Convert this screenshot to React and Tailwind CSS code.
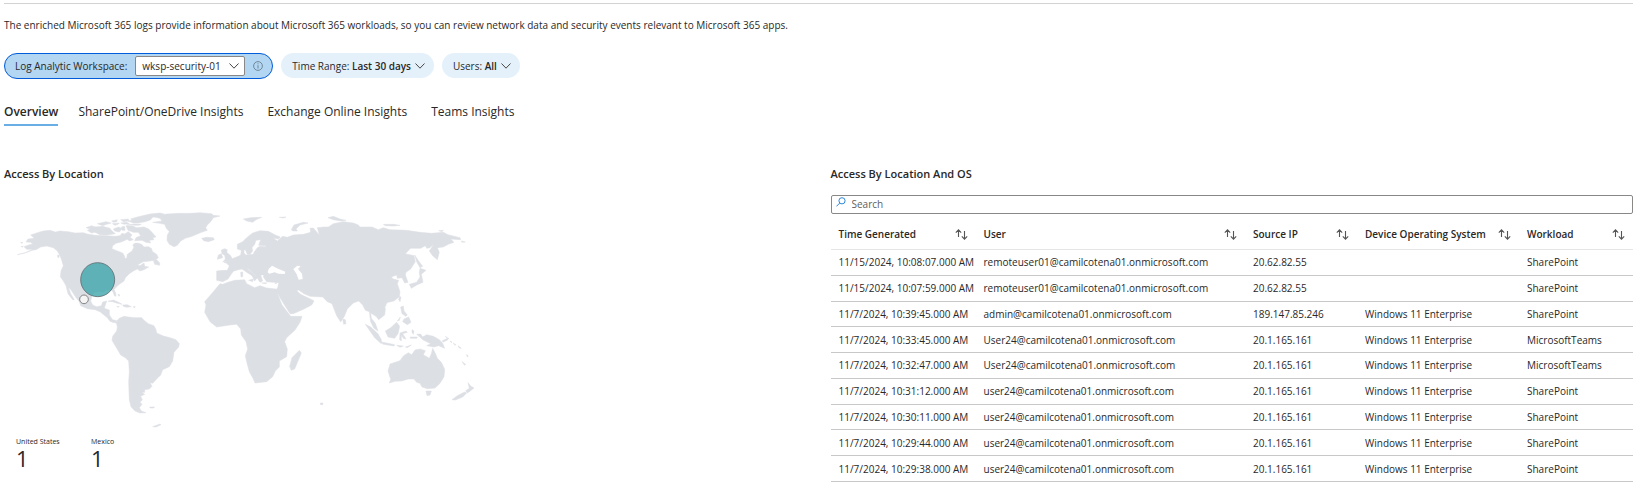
const LAND = [
  // North and Central America
  '52,179 76,173 98,163 80,163 72,155 86,150 98,147 92,142 78,141 84,132 103,130 92,120 112,113 130,108 150,106 166,111 180,108 205,110 225,114 250,113 262,117 285,121 320,122 345,124 360,122 366,115 374,117 385,110 396,120 388,130 366,140 348,145 338,152 336,161 352,168 368,174 374,184 374,190 380,190 382,178 396,168 402,156 398,150 404,145 412,144 425,148 432,156 445,155 454,160 458,170 470,178 475,188 466,195 450,198 430,200 412,210 420,212 432,204 434,214 446,216 432,224 420,228 412,222 400,228 388,236 376,248 372,258 358,268 348,277 342,284 347,294 348,304 343,302 339,290 333,285 318,286 310,291 295,290 283,292 276,302 272,318 278,330 290,335 304,332 308,321 320,318 316,330 313,340 328,345 328,360 338,374 350,377 342,383 330,379 322,368 312,360 300,350 285,344 262,341 242,332 238,320 226,305 214,286 205,276 212,296 223,314 218,314 204,296 198,272 190,258 181,245 183,228 190,212 186,198 180,182 172,168 160,158 140,153 122,156 108,164 96,166 76,174',
  '460,196 470,194 479,204 479,211 464,208', '173,180 178,181 176,189 173,186', '186,200 198,206 196,209', '62,142 69,143 64,145', '63,154 70,154 66,157',
  // Arctic islands
  '262,106 285,96 308,94 330,100 334,106 346,116 320,120 300,119 285,112 274,114', '258,98 275,92 286,96 274,103', '292,86 318,80 334,84 320,88 308,92', '335,78 352,74 350,80 340,82', '337,86 358,84 354,88 345,91', '362,74 385,72 386,78 370,80', '362,84 380,82 388,86 372,88', '378,92 398,93 410,98 432,96 446,102 456,112 468,126 458,128 462,134 448,136 452,144 438,142 426,136 404,137 408,128 422,122 415,112 400,112 384,106', '340,102 356,96 366,101 358,111 344,108', '364,96 374,94 375,106 366,106', '384,78 396,76 392,72 412,66 450,57 480,54 492,57 476,64 458,67 452,74 436,80 414,84 400,84', '380,90 404,87 424,88 416,91', '380,130 392,128 400,134 388,138',
  // Greenland and Iceland
  '458,82 472,80 486,78 480,70 464,66 478,60 500,57 540,55 572,55 600,53 635,56 640,61 660,63 640,68 632,80 622,90 617,98 622,106 605,112 592,117 576,124 556,130 542,138 532,151 522,155 508,148 501,136 502,120 508,110 499,100 494,88 478,85',
  '605,130 620,127 640,128 643,134 625,140 611,137',
  // Caribbean
  '324,319 340,315 356,322 366,328 352,325 338,320', '368,330 382,329 394,335 380,337 370,334', '354,298 360,300 357,304', '399,335 406,335 404,338', '350,334 358,335 354,337',
  // South America
  '340,379 348,380 358,370 372,364 385,366 405,368 425,368 432,376 445,386 462,392 468,404 470,414 490,423 510,428 528,434 538,446 536,456 522,472 518,498 508,515 488,524 482,540 472,550 458,565 450,563 456,574 448,582 434,584 434,592 425,592 434,598 422,604 427,614 420,622 426,628 418,638 424,648 438,653 420,654 405,648 393,635 388,615 387,590 386,560 388,530 386,498 376,488 362,480 348,456 336,436 338,424 350,408 352,396 350,386',
  '449,636 464,636 460,639 451,639', '458,695 480,687 483,689 468,696',
  // Europe and Asia
  '650,228 668,226 682,226 688,213 680,205 672,202 690,196 700,190 715,184 722,180 724,166 732,162 732,174 738,180 760,178 762,172 772,158 780,154 796,155 798,152 776,151 782,134 768,136 764,148 756,158 758,168 750,178 742,178 736,164 724,166 712,162 712,148 728,140 740,128 758,114 780,107 805,109 826,120 841,126 836,132 820,130 832,138 848,124 862,127 880,120 910,118 932,112 930,100 940,99 958,120 952,98 970,96 985,96 1000,86 1030,80 1060,84 1075,90 1080,96 1116,96 1135,104 1150,98 1170,104 1220,106 1260,112 1295,115 1330,112 1344,119 1380,128 1382,134 1352,132 1362,142 1345,148 1330,156 1312,158 1318,172 1312,194 1298,182 1288,168 1296,156 1300,148 1290,158 1280,160 1276,152 1262,160 1232,160 1216,176 1242,182 1246,200 1232,222 1218,232 1216,240 1224,262 1214,264 1206,248 1192,250 1190,240 1174,246 1180,252 1196,256 1192,266 1200,290 1198,305 1182,318 1165,322 1152,328 1156,342 1154,360 1136,374 1128,364 1112,354 1114,370 1126,385 1134,408 1122,400 1112,380 1108,350 1096,346 1088,330 1076,318 1060,324 1042,342 1034,362 1022,381 1010,362 996,326 982,320 968,306 930,304 912,296 896,285 890,287 902,298 914,304 936,314 942,318 935,330 912,342 880,356 870,356 852,328 834,298 826,288 834,276 836,262 818,262 800,260 790,246 792,240 782,240 788,258 780,262 766,240 746,222 738,218 758,234 772,248 764,258 756,242 740,232 726,222 712,225 700,229 692,240 684,252 668,260 650,256',
  '664,165 674,161 682,164 680,172 692,182 697,192 688,197 668,201 676,192 674,181 666,176', '655,180 664,176 668,188 652,193', '722,232 728,231 728,245 723,246', '746,256 760,252 758,260', '785,264 800,263 798,266', '824,264 834,261 828,266',
  '730,72 752,68 785,67 768,74 758,82 740,78', '838,67 858,66 850,69', '874,104 882,90 910,82 924,84 900,90 888,102 892,108 878,108', '984,68 1000,64 1020,72 1038,76 1024,78 1000,74', '1150,88 1180,88 1200,91 1182,93 1156,92', '1316,107 1330,106 1326,110', '1384,138 1396,141 1386,142',
  '1244,180 1256,198 1268,214 1260,218 1250,200', '1260,220 1278,226 1264,238 1269,262 1252,269 1234,280 1228,268 1250,262 1260,246 1258,232', '1199,304 1203,307 1200,320 1196,313', '1152,324 1160,323 1156,335 1150,332',
  '1202,336 1210,333 1212,348 1222,360 1218,364 1206,356', '1212,372 1226,366 1233,382 1222,389 1208,380', '1192,378 1201,366 1198,376', '1028,372 1036,374 1038,386 1031,388',
  // Africa
  '660,266 668,268 684,262 704,256 734,254 740,266 764,278 780,272 800,279 828,282 834,300 846,330 860,348 872,364 906,364 900,382 885,405 860,428 854,440 862,462 860,485 838,498 838,516 826,528 818,545 800,560 765,564 760,552 748,530 740,500 736,482 743,462 738,440 724,420 722,402 710,388 690,390 650,396 630,380 614,352 618,330 614,320 640,290',
  '898,466 904,474 884,522 874,526 869,514 876,488',
  // South East Asia and Oceania
  '1096,388 1112,396 1134,416 1144,434 1144,446 1124,428', '1140,440 1160,444 1184,449 1182,453 1150,448', '1156,408 1172,398 1190,382 1199,394 1194,416 1184,430 1164,426', '1200,414 1218,408 1222,412 1208,416 1218,432 1210,430 1204,420 1204,438 1199,434', '1236,404 1242,408 1240,418 1236,412', '1230,426 1252,426 1250,430 1232,430', '1190,451 1210,453 1200,457', '1216,456 1234,450 1222,458',
  '1250,418 1262,417 1268,426 1280,419 1300,424 1318,434 1328,445 1334,460 1316,452 1302,456 1280,452 1292,446 1268,434 1262,428', '1326,438 1342,430 1344,434 1330,441', '1336,424 1347,431 1342,430', '1350,438 1356,441 1354,443', '1360,444 1368,450 1364,450', '1374,452 1384,460 1378,459', '1386,500 1397,508 1394,511', '1400,478 1405,484 1402,486',
  '1168,515 1170,507 1200,497 1210,483 1225,473 1235,479 1245,465 1260,462 1276,467 1270,479 1288,490 1294,476 1298,460 1306,475 1312,490 1324,502 1334,523 1332,545 1320,565 1305,579 1282,581 1266,576 1260,565 1250,562 1242,552 1225,552 1205,558 1185,559 1168,564 1172,553 1164,528',
  '1278,588 1294,588 1290,600 1281,602', '1404,563 1412,573 1422,579 1412,587 1402,594 1397,587 1408,580', '1394,591 1400,594 1388,606 1366,615 1356,614 1372,602', '961,624 969,624 968,629 962,629',
]

const WATER = [
  '803,232 806,222 816,212 828,218 836,222 856,230 854,237 836,236 824,232 808,236',
  '880,222 892,212 902,214 894,222 906,236 908,252 896,254 890,238',
]

const COLUMNS = ['Time Generated', 'User', 'Source IP', 'Device Operating System', 'Workload']
const DOMAIN = '@camilcotena01.onmicrosoft.com'
const WIN = 'Windows 11 Enterprise'
const ROWS = [
  ['11/15/2024, 10:08:07.000 AM', 'remoteuser01' + DOMAIN, '20.62.82.55', '', 'SharePoint'],
  ['11/15/2024, 10:07:59.000 AM', 'remoteuser01' + DOMAIN, '20.62.82.55', '', 'SharePoint'],
  ['11/7/2024, 10:39:45.000 AM', 'admin' + DOMAIN, '189.147.85.246', WIN, 'SharePoint'],
  ['11/7/2024, 10:33:45.000 AM', 'User24' + DOMAIN, '20.1.165.161', WIN, 'MicrosoftTeams'],
  ['11/7/2024, 10:32:47.000 AM', 'User24' + DOMAIN, '20.1.165.161', WIN, 'MicrosoftTeams'],
  ['11/7/2024, 10:31:12.000 AM', 'user24' + DOMAIN, '20.1.165.161', WIN, 'SharePoint'],
  ['11/7/2024, 10:30:11.000 AM', 'user24' + DOMAIN, '20.1.165.161', WIN, 'SharePoint'],
  ['11/7/2024, 10:29:44.000 AM', 'user24' + DOMAIN, '20.1.165.161', WIN, 'SharePoint'],
  ['11/7/2024, 10:29:38.000 AM', 'user24' + DOMAIN, '20.1.165.161', WIN, 'SharePoint'],
]

function Chevron({ className = '' }) {
  return (
    <svg className={className} width="10" height="6" viewBox="0 0 10 6" fill="none" stroke="#484644" aria-hidden="true">
      <path d="M.5.5 5 5.2 9.5.5" />
    </svg>
  )
}

function SortIcon() {
  return (
    <svg width="13" height="11" viewBox="0 0 13 11" fill="none" stroke="#555" strokeWidth="1.1" aria-hidden="true">
      <path d="M3.5 8V1M.8 3.6 3.5.9l2.7 2.7M9.5 2v8M6.8 7.4l2.7 2.7 2.7-2.7" />
    </svg>
  )
}

function FilterPill({ label, value }) {
  return (
    <button className="flex h-[25px] items-center rounded-full bg-[#e4f1fb] pr-[9px] pl-[11px]">
      <span className="whitespace-pre">{label}: </span>
      <span className="font-semibold">{value}</span>
      <Chevron className="ml-1" />
    </button>
  )
}

function WorldMap() {
  return (
    <svg className="w-[500px] max-w-full" viewBox="0 0 1500 705" role="img" aria-label="World map of access by location">
      <g fill="#dcdfe4" stroke="#dcdfe4" strokeWidth="1.5" strokeLinejoin="round">
        {LAND.map((points) => <polygon key={points} points={points} />)}
      </g>
      <g fill="#fff">
        {WATER.map((points) => <polygon key={points} points={points} />)}
      </g>
      <circle cx="293" cy="254" r="51" fill="#44a8ad" fillOpacity=".83" stroke="#5f6e72" strokeWidth="2.5" />
      <circle cx="252" cy="313" r="13" fill="#f5f5f5" stroke="#707070" strokeWidth="2.5" />
    </svg>
  )
}

function CountryCount({ name, count }) {
  return (
    <div className="w-[75px]">
      <div className="text-[7px] leading-[10px] whitespace-nowrap">{name}</div>
      <div className="text-[22px] leading-[22px] font-medium">{count}</div>
    </div>
  )
}

export default function App() {
  return (
    <main className="bg-white pr-[14px] pl-1 font-['Open_Sans','Noto_Sans',sans-serif] text-[10px] leading-[14px] text-[#292827]">
      <hr className="mt-[3px] border-[#d2d2d2]" />
      <p className="mt-[14px]">
        The enriched Microsoft 365 logs provide information about Microsoft 365 workloads, so you can review network data and security events relevant to Microsoft 365 apps.
      </p>

      <div className="mt-[21px] flex items-start gap-2">
        <div className="flex h-[26px] items-center rounded-full border border-[#015cda] bg-[#b3d6f2] pr-[9px] pl-[10px]">
          <label htmlFor="workspace">Log Analytic Workspace:</label>
          <div className="relative ml-2">
            <select id="workspace" className="h-[20px] w-[110px] appearance-none rounded-[2px] border border-[#8a8886] bg-white pl-[6px]">
              <option>wksp-security-01</option>
            </select>
            <Chevron className="pointer-events-none absolute top-[7px] right-[6px]" />
          </div>
          <svg className="ml-2" width="10" height="10" viewBox="0 0 10 10" fill="none" stroke="#69808f" strokeWidth=".9" aria-hidden="true">
            <circle cx="5" cy="5" r="4.4" />
            <path d="M5 4.2v3.3M5 2.3v1" />
          </svg>
        </div>
        <FilterPill label="Time Range" value="Last 30 days" />
        <FilterPill label="Users" value="All" />
      </div>

      <nav className="mt-[24px] flex text-[12px] leading-[18px]">
        <a href="#overview" className="mr-5 border-b-2 border-[#69afe5] pb-[3px] font-semibold">Overview</a>
        <a href="#sharepoint" className="mr-6">SharePoint/OneDrive Insights</a>
        <a href="#exchange" className="mr-6">Exchange Online Insights</a>
        <a href="#teams">Teams Insights</a>
      </nav>

      <div className="mt-[39px] grid grid-cols-2 gap-6">
        <section>
          <h2 className="text-[11px] leading-[18px] font-semibold">Access By Location</h2>
          <div className="mt-3 -ml-1"><WorldMap /></div>
          <div className="mt-[7px] flex pl-3">
            <CountryCount name="United States" count={1} />
            <CountryCount name="Mexico" count={1} />
          </div>
        </section>

        <section>
          <h2 className="text-[11px] leading-[18px] font-semibold">Access By Location And OS</h2>
          <label className="mt-3 flex h-[19px] rounded-[2px] border border-[#8a8886] pl-1">
            <svg className="mt-px shrink-0" width="10" height="10" viewBox="0 0 10 10" fill="none" stroke="#2b88d8" aria-label="Search">
              <circle cx="6" cy="3.8" r="3.1" />
              <path d="M3.7 6.1.4 9.4" />
            </svg>
            <input type="search" placeholder="Search" className="w-full bg-transparent pb-px pl-[6px] outline-none placeholder:text-[#605e5c]" />
          </label>
          <table className="mt-[10px] h-[258px] w-full table-fixed border-collapse text-left">
            <colgroup>
              <col className="w-[145px]" />
              <col />
              <col className="w-[112px]" />
              <col className="w-[162px]" />
              <col className="w-[114px]" />
            </colgroup>
            <thead>
              <tr className="border-b border-[#e5e5e5]">
                {COLUMNS.map((c) => (
                  <th key={c} className="p-0 pb-[5px] pl-2 font-semibold">
                    <div className="flex h-[20px] items-center justify-between pr-2 whitespace-nowrap">
                      {c}
                      <button aria-label={`Sort by ${c}`}><SortIcon /></button>
                    </div>
                  </th>
                ))}
              </tr>
            </thead>
            <tbody>
              {ROWS.map((row) => (
                <tr key={row[0]} className="border-b border-[#c8c8c8]">
                  {row.map((cell, i) => (
                    <td key={i} className="p-0 pl-2 whitespace-nowrap">{cell}</td>
                  ))}
                </tr>
              ))}
            </tbody>
          </table>
        </section>
      </div>
    </main>
  )
}
